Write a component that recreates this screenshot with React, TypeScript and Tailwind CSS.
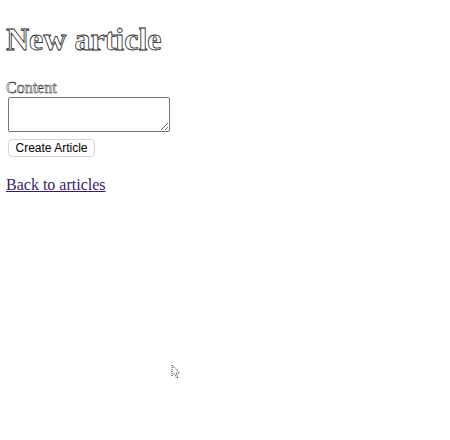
import React from "react";

export default function App() {
  return (
    <div className="relative w-[450px] h-[440px] bg-white overflow-hidden font-['Liberation_Serif',serif] text-black">
      <div className="px-[6px] pt-[21px]">
        <h1 className="text-[32px] font-bold leading-[37px] text-white [-webkit-text-stroke:0.8px_#222]">
          New article
        </h1>
        <form className="mt-[21px] flex flex-col items-start" onSubmit={(e) => e.preventDefault()}>
          <label className="text-[16px] leading-[18px] text-white [-webkit-text-stroke:0.5px_#222]">Content</label>
          <textarea className="ml-[2px] mt-[0px] w-[162px] h-[35px] border border-[#767676] rounded-[2px] p-[2px] text-[13px] resize-y bg-white" />
          <button className="ml-[2px] mt-[7px] h-[18px] w-[87px] rounded-[4px] border border-[#d4d4d4] bg-white text-[12px] leading-[15px] text-black font-['Liberation_Sans',sans-serif]">
            Create Article
          </button>
        </form>
        <a href="#" className="block mt-[19px] text-[16px] leading-[18px] text-[#3b1a72] underline w-fit">
          Back to articles
        </a>
      </div>
      <svg className="absolute left-[171px] top-[364px]" width="10" height="16" viewBox="0 0 10 16">
        <path d="M1 1 L1 12 L3.5 9.5 L5.5 14 L7 13.3 L5 9 L8.5 9 Z" fill="#fff" stroke="#000" strokeWidth="0.8" strokeDasharray="1 1" />
      </svg>
    </div>
  );
}
